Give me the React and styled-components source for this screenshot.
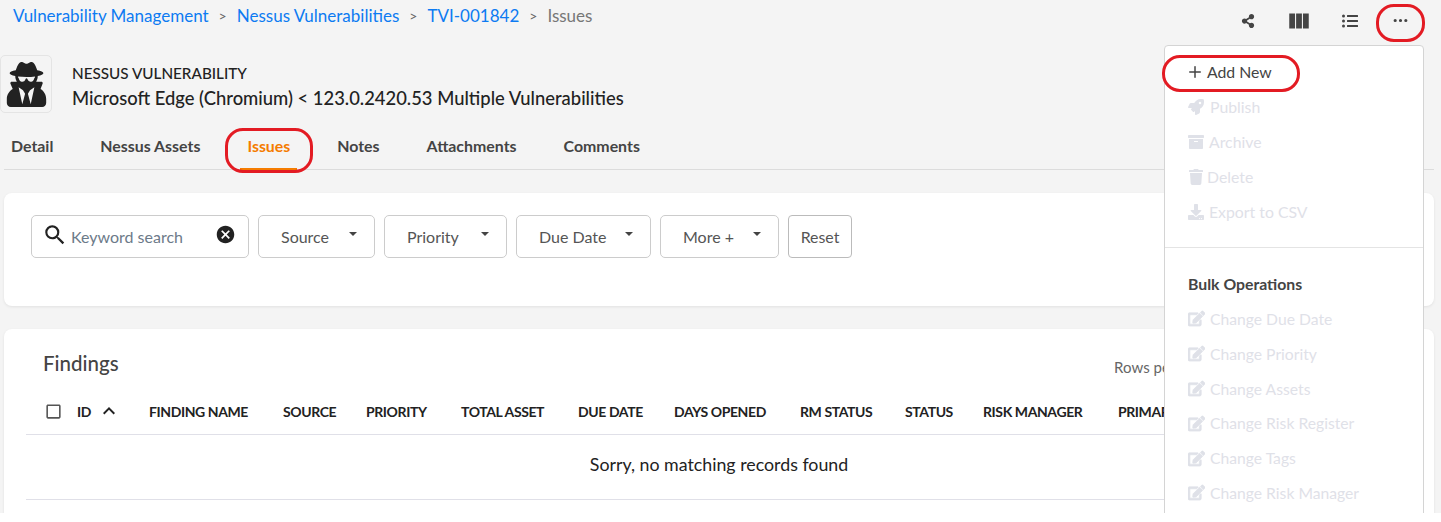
import React from 'react';
import styled, { createGlobalStyle } from 'styled-components';
import {
  FaUserSecret, FaShareAlt, FaListUl, FaRocket, FaArchive,
  FaTrash, FaDownload, FaEdit,
} from 'react-icons/fa';
import { BsThreeDots } from 'react-icons/bs';
import {
  MdViewColumn, MdSearch, MdCancel, MdCheckBoxOutlineBlank, MdExpandLess,
} from 'react-icons/md';
import { Plus } from 'lucide-react';

const GlobalStyle = createGlobalStyle`
  html, body {
    margin: 0;
    background: #fff;
    font-family: Lato, "Liberation Sans", sans-serif;
  }
  * { box-sizing: border-box; }
`;

const Page = styled.div`
  position: relative;
  width: 1441px;
  height: 513px;
  overflow: hidden;
  background: #f4f4f4;
`;

const TopBar = styled.div`
  display: flex;
  justify-content: space-between;
  height: 41px;
  padding: 0 15px 0 13px;
`;

const Breadcrumbs = styled.nav`
  display: flex;
  align-items: center;
  height: 30px;
  font-size: 17px;
`;

const Crumb = styled.a`
  color: ${(p) => (p.$current ? '#777' : '#0d7bf2')};
`;

const Sep = styled.span`
  color: #666;
  font-size: 14px;
  margin: 0 10px;
`;

const Toolbar = styled.div`
  display: flex;
  align-items: center;
  height: 41px;
  color: #444;
`;

const ToolButton = styled.button`
  display: flex;
  align-items: center;
  justify-content: center;
  width: 51px;
  height: 41px;
  padding: 0;
  border: none;
  background: none;
  color: inherit;
`;

const TitleRow = styled.header`
  display: flex;
  align-items: center;
  gap: 20px;
  height: 58px;
  margin-top: 14px;
`;

const Avatar = styled.div`
  display: flex;
  align-items: center;
  justify-content: center;
  width: 52px;
  height: 58px;
  border: 1px solid #e4e4e4;
  border-radius: 5px;
  color: #222;
`;

const TitleText = styled.div`
  padding-top: 4px;
`;

const Overline = styled.div`
  font-size: 15.25px;
  font-weight: 500;
  line-height: 24px;
  color: #222;
`;

const Title = styled.h1`
  margin: 0;
  font-size: 18.4px;
  font-weight: 500;
  line-height: 26px;
  color: #222;
`;

const Tabs = styled.div`
  display: flex;
  gap: 33px;
  height: 42px;
  margin: 15px 7px 0 4px;
  padding-left: 0;
  border-bottom: 1px solid #dcdcdc;
`;

const Tab = styled.div`
  display: flex;
  align-items: center;
  height: 42px;
  padding: 0 7px 6px;
  font-size: 15.9px;
  font-weight: 700;
  color: ${(p) => (p.$active ? '#f57c00' : '#444')};
  border-bottom: 2px solid ${(p) => (p.$active ? '#f57c00' : 'transparent')};
`;

const Card = styled.section`
  margin: 23px 7px 0 4px;
  background: #fff;
  border-radius: 8px;
  box-shadow: 0 1px 3px rgba(0, 0, 0, 0.08);
`;

const FilterBar = styled.div`
  display: flex;
  gap: 9px;
  height: 113px;
  padding: 22px 27px;
`;

const SearchBox = styled.div`
  display: flex;
  align-items: center;
  width: 218px;
  height: 43px;
  padding: 0 12px 0 10px;
  border: 1px solid #ccc;
  border-radius: 5px;
  color: #222;
  svg { margin-bottom: 4px; }
`;

const SearchText = styled.span`
  flex: 1;
  margin-left: 3px;
  font-size: 16px;
  color: #6c7a89;
`;

const Select = styled.div`
  display: flex;
  align-items: center;
  justify-content: space-between;
  width: ${(p) => p.$width}px;
  height: 43px;
  padding: 0 17px 0 22px;
  border: 1px solid #ccc;
  border-radius: 5px;
  font-size: 16px;
  color: #555;
`;

const Caret = styled.i`
  width: 0;
  height: 0;
  margin-bottom: 6px;
  border-left: 4px solid transparent;
  border-right: 4px solid transparent;
  border-top: 4px solid #444;
`;

const ResetButton = styled.button`
  width: 64px;
  height: 43px;
  padding: 0;
  background: #fff;
  border: 1px solid #bbb;
  border-radius: 4px;
  font: inherit;
  font-size: 15.9px;
  color: #555;
`;

const TableCard = styled(Card)`
  height: 300px;
  padding: 0 22px;
`;

const TableHead = styled.div`
  display: flex;
  justify-content: space-between;
  align-items: center;
  height: 70px;
  padding: 0 0 0 17px;
`;

const TableTitle = styled.h2`
  margin: 0 0 2px;
  font-size: 20.5px;
  font-weight: 500;
  color: #444;
`;

const RowsPer = styled.span`
  margin-right: 198px;
  padding-top: 6px;
  font-size: 15px;
  color: #666;
`;

const HeaderRow = styled.div`
  display: flex;
  align-items: center;
  height: 36px;
  padding: 0 0 11px 18px;
  border-bottom: 1px solid #e0e0e8;
`;

const HeaderCell = styled.div`
  display: flex;
  align-items: center;
  flex: none;
  width: ${(p) => p.$width}px;
  font-size: 14px;
  font-weight: 700;
  letter-spacing: -0.4px;
  color: #222;
  white-space: nowrap;
`;

const Empty = styled.div`
  height: 65px;
  line-height: 58px;
  text-align: center;
  font-size: 17.8px;
  color: #222;
  border-bottom: 1px solid #e0e0e8;
`;

const Menu = styled.aside`
  position: absolute;
  top: 45px;
  left: 1164px;
  width: 260px;
  height: 480px;
  padding-top: 8px;
  background: #fff;
  border: 1px solid #d4d4d4;
  border-radius: 4px;
`;

const MenuItem = styled.div`
  display: flex;
  align-items: center;
  height: ${(p) => (p.$bulk ? 34.8 : 35)}px;
  padding-left: 23px;
  font-size: ${(p) => (p.$bulk ? 15.7 : 15.8)}px;
  color: ${(p) => (p.$enabled ? '#444' : '#dfe1e8')};
  svg { flex: none; margin-right: ${(p) => p.$iconGap ?? 5}px; }
`;

const Divider = styled.hr`
  margin: 18px 0 19px;
  border: none;
  border-top: 1px solid #e4e4e4;
`;

const MenuHeading = styled.div`
  height: 34.6px;
  padding-left: 23px;
  line-height: 33px;
  font-size: 15.8px;
  font-weight: 700;
  color: #444;
`;

const Annotation = styled.div`
  position: absolute;
  left: ${(p) => p.$x}px;
  top: ${(p) => p.$y}px;
  width: ${(p) => p.$w}px;
  height: ${(p) => p.$h}px;
  border: 3px solid #e31b23;
  border-radius: 18px;
  pointer-events: none;
`;

const filters = [
  { label: 'Source', width: 117 },
  { label: 'Priority', width: 123 },
  { label: 'Due Date', width: 135 },
  { label: 'More +', width: 119 },
];

const tabs = ['Detail', 'Nessus Assets', 'Issues', 'Notes', 'Attachments', 'Comments'];

const columns = [
  { label: 'FINDING NAME', width: 134 },
  { label: 'SOURCE', width: 83 },
  { label: 'PRIORITY', width: 95 },
  { label: 'TOTAL ASSET', width: 117 },
  { label: 'DUE DATE', width: 96 },
  { label: 'DAYS OPENED', width: 126 },
  { label: 'RM STATUS', width: 105 },
  { label: 'STATUS', width: 78 },
  { label: 'RISK MANAGER', width: 135 },
  { label: 'PRIMARY', width: 100 },
];

const actions = [
  { label: 'Publish', icon: FaRocket, gap: 6 },
  { label: 'Archive', icon: FaArchive, gap: 5 },
  { label: 'Delete', icon: FaTrash, gap: 3 },
  { label: 'Export to CSV', icon: FaDownload, gap: 5 },
];

const bulk = ['Change Due Date', 'Change Priority', 'Change Assets', 'Change Risk Register', 'Change Tags', 'Change Risk Manager'];

export default function App() {
  return (
    <Page>
      <GlobalStyle />
      <TopBar>
        <Breadcrumbs>
          <Crumb>Vulnerability Management</Crumb>
          <Sep>&gt;</Sep>
          <Crumb>Nessus Vulnerabilities</Crumb>
          <Sep>&gt;</Sep>
          <Crumb>TVI-001842</Crumb>
          <Sep>&gt;</Sep>
          <Crumb $current>Issues</Crumb>
        </Breadcrumbs>
        <Toolbar>
          <ToolButton><FaShareAlt size={14} /></ToolButton>
          <ToolButton><MdViewColumn size={26} /></ToolButton>
          <ToolButton><FaListUl size={16} /></ToolButton>
          <ToolButton><BsThreeDots size={17} /></ToolButton>
        </Toolbar>
      </TopBar>

      <TitleRow>
        <Avatar><FaUserSecret size={45} /></Avatar>
        <TitleText>
          <Overline>NESSUS VULNERABILITY</Overline>
          <Title>Microsoft Edge (Chromium) &lt; 123.0.2420.53 Multiple Vulnerabilities</Title>
        </TitleText>
      </TitleRow>

      <Tabs>
        {tabs.map((t) => (
          <Tab key={t} $active={t === 'Issues'}>{t}</Tab>
        ))}
      </Tabs>

      <Card>
        <FilterBar>
          <SearchBox>
            <MdSearch size={26} />
            <SearchText>Keyword search</SearchText>
            <MdCancel size={21} />
          </SearchBox>
          {filters.map((f) => (
            <Select key={f.label} $width={f.width}>
              {f.label}
              <Caret />
            </Select>
          ))}
          <ResetButton>Reset</ResetButton>
        </FilterBar>
      </Card>

      <TableCard>
        <TableHead>
          <TableTitle>Findings</TableTitle>
          <RowsPer>Rows per page:</RowsPer>
        </TableHead>
        <HeaderRow>
          <HeaderCell $width={33}><MdCheckBoxOutlineBlank size={19} color="#555" /></HeaderCell>
          <HeaderCell $width={72}>ID<MdExpandLess size={24} style={{ marginLeft: 6 }} /></HeaderCell>
          {columns.map((c) => (
            <HeaderCell key={c.label} $width={c.width}>{c.label}</HeaderCell>
          ))}
        </HeaderRow>
        <Empty>Sorry, no matching records found</Empty>
      </TableCard>

      <Menu>
        <MenuItem $enabled $iconGap={3}><Plus size={18} strokeWidth={2} style={{ marginLeft: -2 }} />Add New</MenuItem>
        {actions.map(({ label, icon: Icon, gap }) => (
          <MenuItem key={label} $iconGap={gap}><Icon size={16} />{label}</MenuItem>
        ))}
        <Divider />
        <MenuHeading>Bulk Operations</MenuHeading>
        {bulk.map((label) => (
          <MenuItem key={label} $bulk $iconGap={5}><FaEdit size={17} stroke="currentColor" strokeWidth={24} />{label}</MenuItem>
        ))}
      </Menu>

      <Annotation $x={1376} $y={4} $w={49} $h={38} />
      <Annotation $x={1162} $y={55} $w={138} $h={37} />
      <Annotation $x={225} $y={128} $w={88} $h={45} />
    </Page>
  );
}
